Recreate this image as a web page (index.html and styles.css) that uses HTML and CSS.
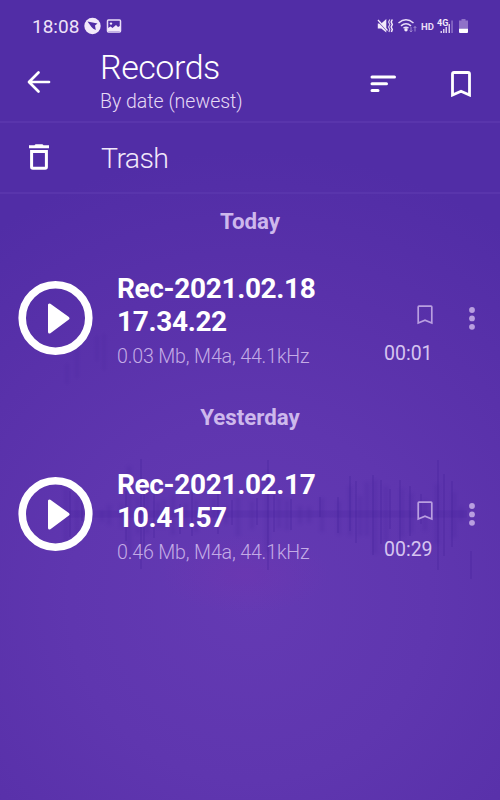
FILE: index.html
```html
<!DOCTYPE html>
<html lang="en">
<head>
  <meta charset="UTF-8" />
  <meta name="viewport" content="width=device-width, initial-scale=1" />
  <title>Records</title>
  <link rel="stylesheet" href="styles.css">
</head>
<body>
  <div class="status-bar">
    <span class="clock">18:08</span>
    <svg class="status-left" width="38" height="18" viewBox="0 0 38 18">
      <circle cx="8.5" cy="9" r="8.2" fill="#f3eafa"/>
      <path d="M3.5 4.5l10 2-2.5 2 .8 4.5-2.5-1.3L7.5 10z" fill="#512da6"/>
      <rect x="23.5" y="3" width="13" height="12" rx="1" fill="none" stroke="#e9ddf7" stroke-width="1.5"/>
      <path d="M24 14v-3l2.5-1.5 2 1.5 3.5-3 2 2 2-1v5z" fill="#f3eafa"/>
      <circle cx="27" cy="6.6" r="1.2" fill="#f3eafa"/>
    </svg>
    <svg class="status-right" width="92" height="18" viewBox="0 0 92 18">
      <path d="M.8 6.5h3.5L9.300 2v13.500l-5-4H.8z" fill="#f3eafa"/>
      <path d="M1 4.200l9.300 9.800" stroke="#512da6" stroke-width="1.200"/>
      <path d="M1 3l9.500 10.500" stroke="#f3eafa" stroke-width="1.300"/>
      <path d="M12.800 2.500L11.600 5l1.200 2.500-1.200 2.500 1.200 2.500-.9 2.500" fill="none" stroke="#d9c9ee" stroke-width="1.200"/>
      <path d="M15.300 2.500L14.200 5l1.100 2.500-1.100 2.500 1.100 2.500-.9 2.500" fill="none" stroke="#f3eafa" stroke-width="1.500"/>
      <circle cx="29" cy="12.800" r="1.700" fill="#f3eafa"/>
      <g fill="none" stroke="#e9ddf7" stroke-width="1.500">
        <path d="M21.500 6q7.500-6.500 15 0M24 8.800q5-4 10 0M26.500 11.200q2.500-2 5 0"/>
        <path d="M34 10v5M32.700 13.500L34 15l1.300-1.500M38 14.500v-5M36.700 11L38 9.500 39.300 11" stroke="#9d84cf" stroke-width="1"/>
      </g>
      <text x="44" y="12.500" class="tag-hd">HD</text>
      <text x="60" y="8.500" class="tag-4g">4G</text>
      <g fill="#d9c9ee">
        <path d="M63.500 14h1.500v2h-1.500zM66 12h1.500v4H66zM68.500 10h1.500v6h-1.500zM71.500 7h1.500v9h-1.500z"/>
        <path d="M74.300 3.500h1.500V16h-1.500z" fill="#8f72c8"/>
        <path d="M84.500 2h4v1.500h2.500V11h-9V3.500h2.500z" fill="#8f72c8"/>
        <path d="M82 11.500h9V15q0 1-1 1h-7q-1 0-1-1z" fill="#fff"/>
      </g>
    </svg>
  </div>

  <header class="toolbar">
    <button class="icon-btn" aria-label="Back">
      <svg width="24" height="24" viewBox="0 0 24 24"><path d="M22 12H2.500M11.500 2.500L2 12l9.500 9.500" fill="none" stroke="#fff" stroke-width="2.700" stroke-linecap="round" stroke-linejoin="round"/></svg>
    </button>
    <div class="heading">
      <h1>Records</h1>
      <p>By date (newest)</p>
    </div>
    <button class="icon-btn sort" aria-label="Sort">
      <svg width="26" height="18" viewBox="0 0 26 18"><path d="M2 2h22.500M2 8.800h14.500M2 15.600h6" fill="none" stroke="#fff" stroke-width="3" stroke-linecap="round"/></svg>
    </button>
    <button class="icon-btn bookmarks" aria-label="Bookmarks">
      <svg width="20" height="26" viewBox="0 0 20 26"><path d="M1.500 24V3Q1.500 1.500 3 1.500h14Q18.500 1.500 18.500 3v21L10 20.200z" fill="none" stroke="#fff" stroke-width="2.800"/></svg>
    </button>
  </header>

  <a class="trash" href="#">
    <svg width="20" height="26" viewBox="0 0 20 26">
      <path d="M5.500 1.300Q6 .3 7 .3h6q1 0 1.500 1H20v3H0v-3z" fill="#fff"/>
      <path d="M2.600 7.500h14.800V23q0 1.300-1.300 1.300H3.900q-1.300 0-1.300-1.300z" fill="none" stroke="#fff" stroke-width="3"/>
    </svg>
    <span>Trash</span>
  </a>

  <main class="records">
    <svg class="waveform" width="500" height="320" viewBox="0 0 500 320">
      <g fill="none" stroke="#43209a">
        <path class="soft" d="M66 214v56M77 222v38M102 236v12M109 231v20M122 230v24M129 192v90M138 224v36M147 220v40M158 228v26M164 226v28M173 221v40M186 229v22M196 226v32M214 225v28M226 232v18M238 224v38M252 227v28M267 198v80M279 224v30M287 226v30M300 232v18M309 233v16M322 224v34M339 227v34M350 212v50M360 222v40M367 208v54M375 206v74M386 212v56M402 215v48M411 219v40M425 226v31M437 210v60M454 218v46M461 233v14"/>
        <path class="sharp" d="M70 217v46M82 227v20M126 217v50M141 185v110M144 208v70M154 220v44M180 230v30M192 212v50M218 218v42M232 226v25M257 224v27M268 186v110M274 221v37M291 225v31M320 223v20M338 223v36M350 202v55M356 207v62M373 201v80M381 206v64M390 215v40M400 206v64M410 212v50M421 220v30M438 186v110M444 200v82M452 207v66M471 277v28"/>
        <path class="base" d="M62 240h405"/>
        <path class="faint" d="M67 90v20M97 62v25M104 60v36M77 70v34"/>
      </g>
    </svg>

    <h2 class="day">Today</h2>
    <article class="record">
      <svg class="play" width="76" height="76" viewBox="0 0 76 76">
        <circle cx="37.500" cy="38" r="33.300" fill="none" stroke="#fff" stroke-width="7.600"/>
        <path d="M31.500 25v27L50 38.300z" fill="#fff" stroke="#fff" stroke-width="3" stroke-linejoin="round"/>
      </svg>
      <div class="info">
        <h3>Rec-2021.02.18<br>17.34.22</h3>
        <p>0.03 Mb, M4a, 44.1kHz</p>
      </div>
      <div class="side">
        <svg width="16" height="20" viewBox="0 0 16 20"><path d="M1.200 18V2Q1.200 1.200 2 1.200h12Q14.800 1.200 14.800 2v16L8 15.200z" fill="none" stroke="#b99fe0" stroke-width="1.700"/></svg>
        <span>00:01</span>
      </div>
      <svg class="more" width="6" height="24" viewBox="0 0 6 24"><circle cx="3" cy="3" r="2.900"/><circle cx="3" cy="11.400" r="2.900"/><circle cx="3" cy="19.800" r="2.900"/></svg>
    </article>

    <h2 class="day">Yesterday</h2>
    <article class="record">
      <svg class="play" width="76" height="76" viewBox="0 0 76 76">
        <circle cx="37.500" cy="38" r="33.300" fill="none" stroke="#fff" stroke-width="7.600"/>
        <path d="M31.500 25v27L50 38.300z" fill="#fff" stroke="#fff" stroke-width="3" stroke-linejoin="round"/>
      </svg>
      <div class="info">
        <h3>Rec-2021.02.17<br>10.41.57</h3>
        <p>0.46 Mb, M4a, 44.1kHz</p>
      </div>
      <div class="side">
        <svg width="16" height="20" viewBox="0 0 16 20"><path d="M1.200 18V2Q1.200 1.200 2 1.200h12Q14.800 1.200 14.800 2v16L8 15.200z" fill="none" stroke="#b99fe0" stroke-width="1.700"/></svg>
        <span>00:29</span>
      </div>
      <svg class="more" width="6" height="24" viewBox="0 0 6 24"><circle cx="3" cy="3" r="2.900"/><circle cx="3" cy="11.400" r="2.900"/><circle cx="3" cy="19.800" r="2.900"/></svg>
    </article>
  </main>
</body>
</html>
```
FILE: styles.css
```css
/* RESET & BASE */
* { box-sizing: border-box; margin: 0; padding: 0; }
body {
  height: 800px;
  font-family: Roboto, sans-serif;
  color: #fff;
  overflow: hidden;
  background:
    radial-gradient(ellipse 85px 40px at 244px 574px, rgba(120,50,175,0.3), transparent),
    radial-gradient(circle 450px at 250px 600px, #643ab3 0%, #5f36af 40%, #5931aa 70%, #512da6 100%);
}
svg { display: block; flex: none; }
button { background: none; border: 0; color: inherit; }

.status-bar {
  height: 52px;
  padding: 0 31px 0 32px;
  display: flex;
  align-items: center;
}
.clock {
  font-size: 19px;
  line-height: 20px;
  width: 52px;
  padding-top: 1px;
  color: #eee2f8;
}
.status-right { margin-left: auto; }
.tag-hd { font-size: 9.5px; font-weight: 700; fill: #e9ddf7; }
.tag-4g { font-size: 9px; font-weight: 700; fill: #f3eafa; }

.toolbar {
  height: 71px;
  padding: 0 29px 0 27px;
  display: flex;
  border-bottom: 2px solid #5935ac;
}
.icon-btn { height: 60px; display: flex; align-items: center; }
.heading { margin-left: 49px; flex: 1; white-space: nowrap; }
.heading h1 {
  font-size: 34px;
  font-weight: 300;
  line-height: 34px;
  letter-spacing: -0.45px;
  margin-top: -2px;
}
.heading p {
  font-size: 19.5px;
  font-weight: 300;
  line-height: 22px;
  margin-top: 7px;
  color: #e6daf5;
}
.sort { margin-right: 55px; padding-top: 4px; }
.bookmarks { padding-top: 4px; }

.trash {
  height: 71px;
  padding-left: 29px;
  display: flex;
  align-items: center;
  gap: 52px;
  font-size: 28.5px;
  font-weight: 300;
  letter-spacing: -0.6px;
  color: #f1e8fa;
  text-decoration: none;
  border-bottom: 2px solid #5935ac;
}
.trash svg { margin-bottom: 2px; }
.trash span { padding-top: 2px; }

.records { position: relative; }
.waveform { position: absolute; top: 80px; left: 0; }
.soft { stroke-width: 5; opacity: .16; filter: blur(1.5px); }
.sharp { stroke-width: 2; opacity: .25; filter: blur(.7px); }
.base { stroke-width: 7; opacity: .17; }
.faint { stroke-width: 4; opacity: .1; filter: blur(1px); }

.day {
  position: relative;
  height: 54px;
  font-size: 22.3px;
  font-weight: 700;
  line-height: 54px;
  text-align: center;
  color: #cdb8ec;
}
.record {
  position: relative;
  height: 142px;
  padding: 0 25px 0 18px;
  display: flex;
}
.play { margin-top: 32px; }
.info { margin: 24px 0 0 23px; width: 240px; white-space: nowrap; }
.info h3 {
  font-size: 28px;
  font-weight: 700;
  line-height: 33px;
  letter-spacing: -0.35px;
}
.info p {
  font-size: 19.6px;
  font-weight: 300;
  line-height: 24px;
  letter-spacing: -0.15px;
  margin-top: 7px;
  color: #c4ace6;
}
.side {
  margin-left: auto;
  padding: 57px 0 0;
  width: 50px;
  display: flex;
  flex-direction: column;
  font-size: 19.5px;
  line-height: 24px;
  color: #d6c4f0;
}
.side svg { align-self: flex-end; margin: 0 1px 17px; }
.more { margin: 59px 0 0 35px; fill: #b99fe0; }
```
